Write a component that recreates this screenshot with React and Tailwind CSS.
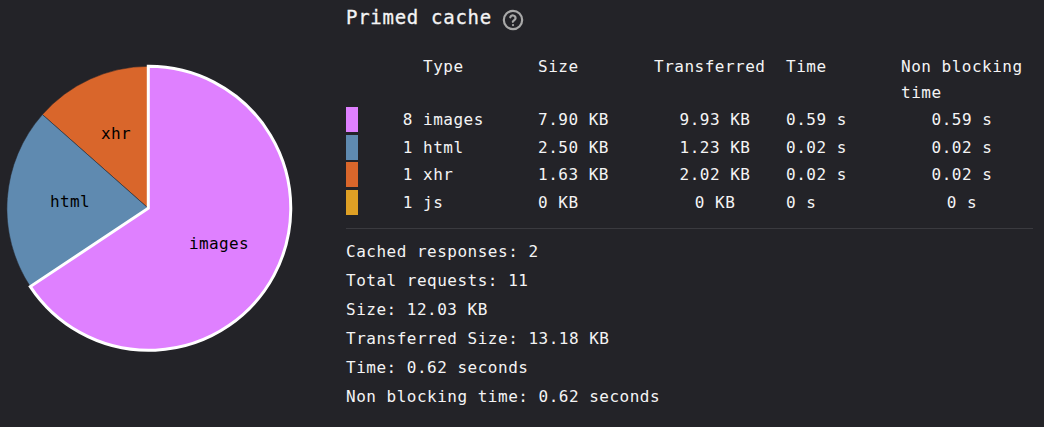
import React from "react";

const rows = [
  { c: "bg-[#df80ff]", n: 8, t: "images", s: "7.90 KB", x: "9.93 KB", m: "0.59 s", b: "0.59 s" },
  { c: "bg-[#5f8ab0]", n: 1, t: "html", s: "2.50 KB", x: "1.23 KB", m: "0.02 s", b: "0.02 s" },
  { c: "bg-[#d9662b]", n: 1, t: "xhr", s: "1.63 KB", x: "2.02 KB", m: "0.02 s", b: "0.02 s" },
  { c: "bg-[#dea025]", n: 1, t: "js", s: "0 KB", x: "0 KB", m: "0 s", b: "0 s" },
];
const stats = [
  "Cached responses: 2",
  "Total requests: 11",
  "Size: 12.03 KB",
  "Transferred Size: 13.18 KB",
  "Time: 0.62 seconds",
  "Non blocking time: 0.62 seconds",
];

function Pie() {
  const cx = 148.3, cy = 208.3, r = 142;
  return (
    <svg width="300" height="427" className="block shrink-0" style={{ fontFamily: "'DejaVu Sans Mono', monospace" }}>
      <path d={`M${cx} ${cy}L42.4 114.6A${r} ${r} 0 0 1 ${cx} ${cy - r}Z`} fill="#d9662b" stroke="#232328" strokeWidth="0.5" />
      <path d={`M${cx} ${cy}L30.3 286.6A${r} ${r} 0 0 1 42.4 114.6Z`} fill="#5f8ab0" stroke="#232328" strokeWidth="0.5" />
      <path d={`M${cx} ${cy}L${cx} ${cy - r}A${r} ${r} 0 1 1 30.3 286.6Z`} fill="#df80ff" stroke="#ffffff" strokeWidth="3" />
      <text x="219" y="249" textAnchor="middle" fontSize="16" letterSpacing="0.4" fill="#000">images</text>
      <text x="70" y="207" textAnchor="middle" fontSize="16" letterSpacing="0.4" fill="#000">html</text>
      <text x="116" y="139" textAnchor="middle" fontSize="16" letterSpacing="0.4" fill="#000">xhr</text>
    </svg>
  );
}

function Help() {
  return (
    <svg width="22" height="22" viewBox="0 0 24 24" fill="none" stroke="#a8a8a8" strokeWidth="2.4" strokeLinecap="round" strokeLinejoin="round">
      <circle cx="12" cy="12" r="10" />
      <path d="M9 9a3 3 0 0 1 5.8 1c0 2-3 2.6-3 4" />
      <path d="M12 17.5h.01" />
    </svg>
  );
}

export default function App() {
  return (
    <div className="flex w-[1044px] h-[427px] overflow-hidden bg-[#232328] text-[#f4f4f5] font-['DejaVu_Sans_Mono',monospace] text-[16px] tracking-[0.5px]">
      <Pie />
      <div className="ml-[46px] w-[687px] flex flex-col">
        <div className="flex items-center h-[38px] pt-[2px] gap-[10px]">
          <span className="text-[19px] [-webkit-text-stroke:0.3px_#f4f4f5] tracking-[0.72px] leading-none -mt-[5px]">Primed cache</span>
          <Help />
        </div>
        <table className="mt-[16px] table-fixed border-collapse w-[687px]">
          <colgroup>
            <col className="w-[12px]" />
            <col className="w-[65px]" />
            <col className="w-[115px]" />
            <col className="w-[116px]" />
            <col className="w-[132px]" />
            <col className="w-[115px]" />
            <col className="w-[132px]" />
          </colgroup>
          <thead>
            <tr className="align-top leading-[26px] text-left font-normal">
              <th className="font-normal" />
              <th className="font-normal" />
              <th className="font-normal">Type</th>
              <th className="font-normal">Size</th>
              <th className="font-normal">Transferred</th>
              <th className="font-normal">Time</th>
              <th className="font-normal">Non blocking time</th>
            </tr>
          </thead>
          <tbody>
            {rows.map((r) => (
              <tr key={r.t} className="h-[27.5px] leading-[27.5px]">
                <td className="p-0"><div className={`w-[12px] h-[25px] ${r.c}`} /></td>
                <td className="text-right pr-[10px]">{r.n}</td>
                <td>{r.t}</td>
                <td>{r.s}</td>
                <td className="text-center pr-[10px]">{r.x}</td>
                <td>{r.m}</td>
                <td className="text-center pr-[10px]">{r.b}</td>
              </tr>
            ))}
          </tbody>
        </table>
        <div className="mt-[12px] border-t border-[#3a3a3f] pt-[8px] flex flex-col">
          {stats.map((s) => (
            <div key={s} className="h-[29px] leading-[29px] whitespace-nowrap">{s}</div>
          ))}
        </div>
      </div>
    </div>
  );
}
